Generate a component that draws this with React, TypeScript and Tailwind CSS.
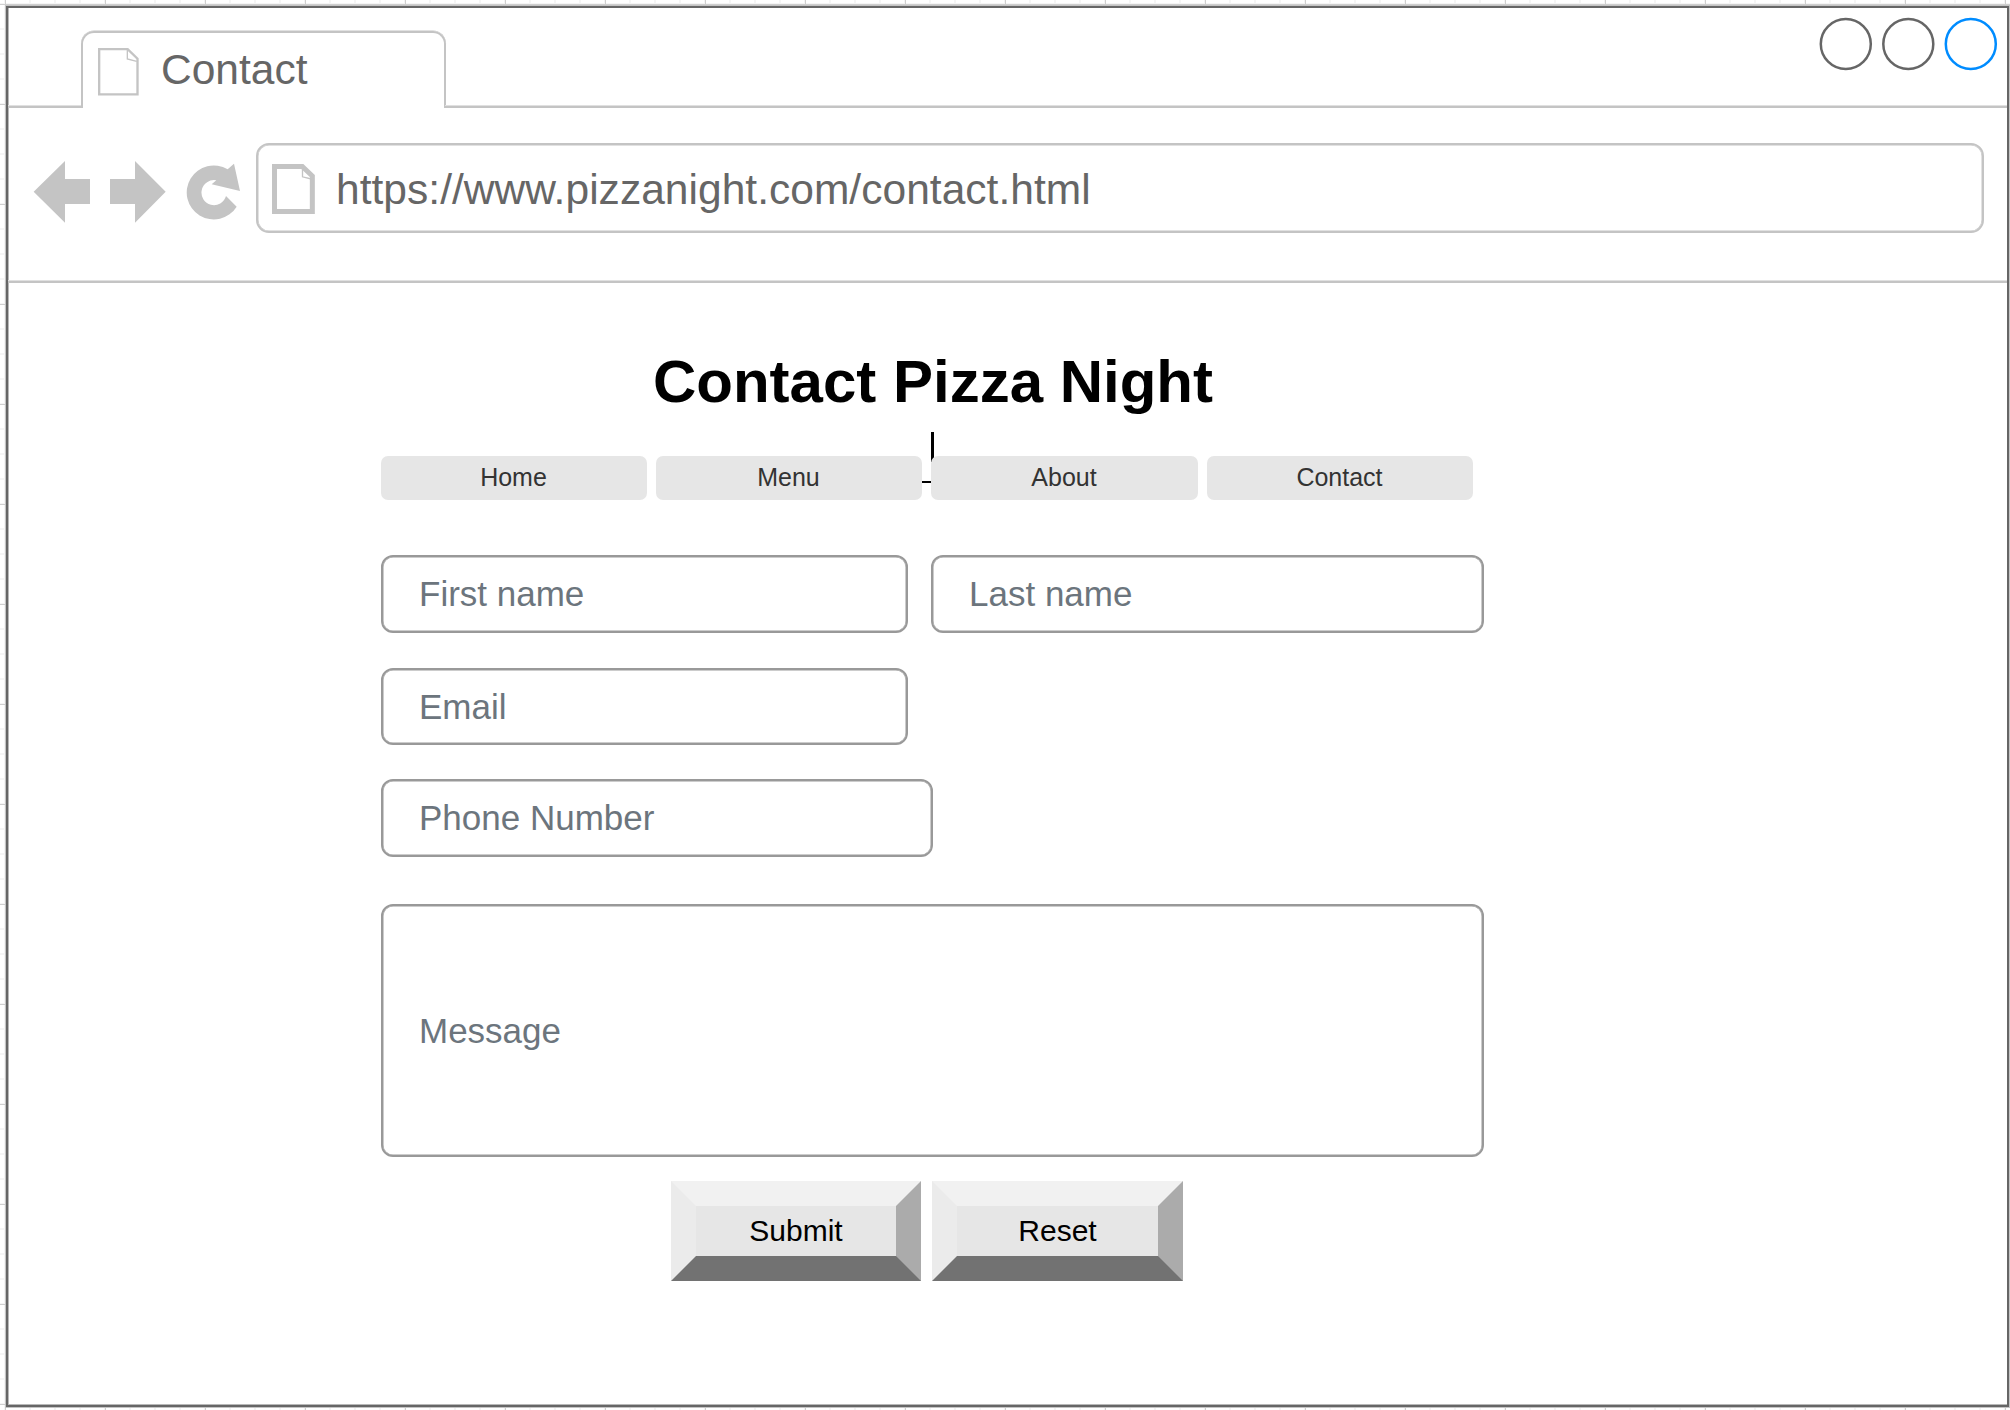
import React from "react";

const GRID =
  "bg-[linear-gradient(#cfcfcf_1px,transparent_1px),linear-gradient(90deg,#cfcfcf_1px,transparent_1px),linear-gradient(#f5f5f5_2px,transparent_2px),linear-gradient(90deg,#f5f5f5_2px,transparent_2px)] bg-[size:100px_100px,100px_100px,25px_25px,25px_25px] bg-[position:5px_4px,5px_4px,4px_3px,4px_3px]";

function TabPageIcon() {
  return (
    <svg className="block h-12 w-[41px]" viewBox="295 144 123 144" fill="none" stroke="#c4c4c4">
      <path d="M298.5 147.5H384L413.5 176V283H298.5Z" strokeWidth="7" />
      <path d="M383 149V177L411 184" strokeWidth="4" />
    </svg>
  );
}

function UrlPageIcon() {
  return (
    <svg className="block h-[50px] w-[43px]" viewBox="816 492 129 150" fill="none" stroke="#c4c4c4">
      <path d="M823.5 499.5H907L937 528V634.5H823.5Z" strokeWidth="15" />
      <path d="M907.5 504V530.5L934 537" strokeWidth="4" />
    </svg>
  );
}

function NavIcons() {
  return (
    <svg className="block h-[64px] w-[210px]" viewBox="99 480 630 192" fill="#c4c4c4">
      <path d="M101 575.5L195 483V537H270V612H195V668Z" />
      <path d="M497 575.5L405 483V537H330V612H405V668Z" />
      <path d="M683 508L702 491L720 573L635 553L649 541A37.5 37.5 0 1 0 678 588L710 620A81 81 0 1 1 683 508Z" />
    </svg>
  );
}

function WindowControls() {
  return (
    <svg className="mr-[8px] mt-[8px] block h-[56px] w-[182px]" viewBox="1817 16 182 56" fill="none" strokeWidth="2.5">
      <circle cx="1845.8" cy="44" r="25" stroke="#666" />
      <circle cx="1908.3" cy="44" r="25" stroke="#666" />
      <circle cx="1970.8" cy="44" r="25" stroke="#008cff" />
    </svg>
  );
}

function Field({ label, size }: { label: string; size: string }) {
  return (
    <div className={`flex items-center rounded-[12px] border-2 border-[#999] pl-[36px] text-[35px] leading-none text-[#6c757d] shadow-[inset_0_0_0_0.5px_#999] ${size}`}>
      <span className="-mt-px">{label}</span>
    </div>
  );
}

function NavButton({ label, width = "w-[266px]" }: { label: string; width?: string }) {
  return (
    <div className={`relative flex h-[44.5px] items-center justify-center rounded-[7px] bg-[#e6e6e6] text-[25px] leading-none text-[#333] ${width}`}>
      <span className="-ml-px">{label}</span>
    </div>
  );
}

function BevelButton({ label, width }: { label: string; width: string }) {
  return (
    <div className={`flex h-[100px] items-center justify-center border-[25px] border-b-[#727272] border-l-[#ebebeb] border-r-[#ababab] border-t-[#f1f1f1] bg-[#e6e6e6] text-[30px] leading-none text-black ${width}`}>
      <span className="-mt-px">{label}</span>
    </div>
  );
}

export default function App() {
  return (
    <div className={`h-[1410px] w-[2010px] overflow-hidden bg-white pl-[6px] pt-[6px] font-['Liberation_Sans',Arial,sans-serif] ${GRID}`}>
      <div className="flex h-[1401px] w-[2003px] flex-col border-2 border-[#666] bg-white shadow-[0_0_0_1px_#c4c4c4,inset_1px_-1px_0_0_#b8b8b8]">
        <header className="flex h-[100px] shrink-0">
          <div className="w-[74px] border-b-2 border-[#c4c4c4] shadow-[inset_0_-1px_0_0_#e0e0e0]" />
          <div className="-ml-px mt-[23px] flex h-[77px] w-[365px] rounded-t-[13px] border-2 border-b-0 border-[#c4c4c4] pl-[15px] pt-[15px] text-[#666] shadow-[0_-0.5px_0_0_#c4c4c4]">
            <TabPageIcon />
            <span className="ml-[22px] mt-[-2px] text-[42.5px] leading-[48px]">Contact</span>
          </div>
          <div className="-ml-px flex flex-1 justify-end border-b-2 border-[#c4c4c4] shadow-[inset_0_-1px_0_0_#e0e0e0]">
            <WindowControls />
          </div>
        </header>

        <div className="flex h-[175px] shrink-0 border-b-2 border-[#c4c4c4] pl-[25px] pt-[35px] shadow-[inset_0_-1px_0_0_#e0e0e0]">
          <div className="mt-[17px] w-[223px]">
            <NavIcons />
          </div>
          <div className="flex h-[90px] w-[1728px] rounded-[13px] border-2 border-[#c4c4c4] pl-[14px] pt-[19px] text-[#666] shadow-[inset_0_0_0_0.5px_#c4c4c4]">
            <UrlPageIcon />
            <span className="ml-[21px] mt-[2px] text-[42.5px] leading-[48px] tracking-[0.03px]">https://www.pizzanight.com/contact.html</span>
          </div>
        </div>

        <main className="ml-[373px] w-[1104px]">
          <h1 className="pt-[65px] text-center text-[60px] font-bold leading-[68px] text-black">Contact Pizza Night</h1>

          <nav className="relative mt-[39.5px] flex gap-[9px]">
            <div className="absolute left-[550px] top-[-23.5px] h-[30px] w-[2.5px] bg-black" />
            <div className="absolute left-[530px] top-[25px] h-[2.5px] w-[20px] bg-black" />
            <NavButton label="Home" />
            <NavButton label="Menu" />
            <NavButton label="About" width="w-[267px]" />
            <NavButton label="Contact" />
          </nav>

          <div className="mt-[55px] flex gap-[23px]">
            <Field label="First name" size="h-[78px] w-[527px]" />
            <Field label="Last name" size="h-[78px] w-[553px]" />
          </div>
          <div className="mt-[35px]">
            <Field label="Email" size="h-[77px] w-[527px]" />
          </div>
          <div className="mt-[34px]">
            <Field label="Phone Number" size="h-[78px] w-[552px]" />
          </div>
          <div className="mt-[47px]">
            <Field label="Message" size="h-[253px] w-[1103px]" />
          </div>

          <div className="ml-[290px] mt-[24px] flex gap-[11px]">
            <BevelButton label="Submit" width="w-[250px]" />
            <BevelButton label="Reset" width="w-[251px]" />
          </div>
        </main>
      </div>
    </div>
  );
}
